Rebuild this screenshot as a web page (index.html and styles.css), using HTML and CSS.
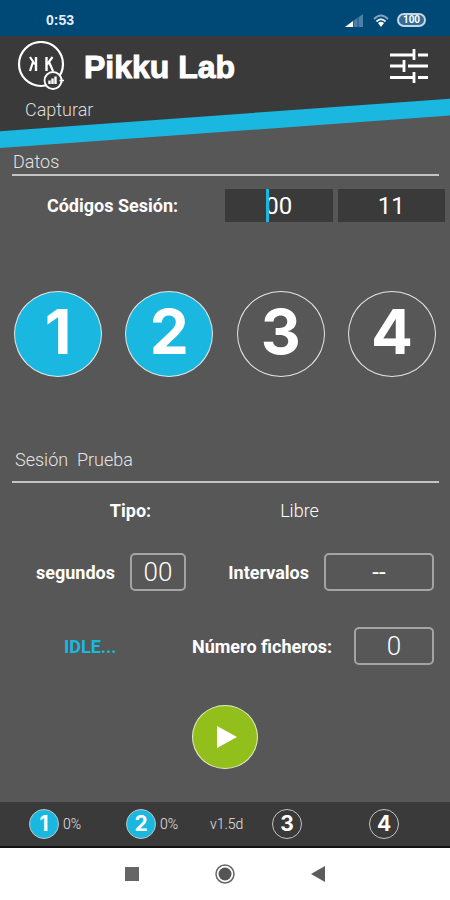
FILE: index.html
```html
<!DOCTYPE html>
<html lang="es">
<head>
<meta charset="utf-8">
<meta name="viewport" content="width=device-width, initial-scale=1">
<title>Pikku Lab</title>
<link rel="stylesheet" href="styles.css">
</head>
<body>
<div class="status">
  <span class="clock">0:53</span>
  <svg class="signal" width="18" height="13" viewBox="0 0 18 13" aria-hidden="true">
    <path d="M0 13 18 0V13Z" fill="#4b7fa8"/><path d="M0 13 8 7V13Z" fill="#fff"/>
    <path d="M8.500 6V13M13 3V13" stroke="#1d5b8c" stroke-width="1"/>
  </svg>
  <svg class="wifi" width="16" height="13" viewBox="0 0 16 13" fill="none" aria-hidden="true">
    <path d="M1 5Q8-2 15 5" stroke="#7fa5c2" stroke-width="2"/>
    <path d="M3.500 7.500Q8 3 12.500 7.500" stroke="#e4edf4" stroke-width="2"/>
    <path d="M5 9Q8 6.500 11 9L8 13Z" fill="#fff"/>
  </svg>
  <span class="battery">100</span>
</div>

<header class="header">
  <div class="brand">
    <svg class="logo" width="48" height="50" viewBox="0 0 48 50" fill="none" stroke="#fff" aria-hidden="true">
      <circle cx="24" cy="23" r="22" stroke-width="2.200"/>
      <path d="M19 16V30M29.500 16V30" stroke-width="2.400"/>
      <path d="M13 16 18 23.500M16 21 13 30M35.500 16 30 23.500M32 21 36 30" stroke-width="2.200"/>
      <circle cx="36" cy="39.500" r="8.500" fill="#3a3a3a" stroke-width="1.800"/>
      <path d="M32.500 43V39.500M35.500 43V37.500M38.500 43V35.500" stroke-width="2.400"/>
      <path d="M42.500 39.500H47M44.700 37V42" stroke-width="1.300"/>
    </svg>
    <h1 class="title">Pikku Lab</h1>
    <button class="settings" type="button" aria-label="Ajustes">
      <svg width="38" height="34" viewBox="0 0 38 34" fill="none" stroke="#fff" stroke-width="2.800" aria-hidden="true">
        <path d="M0 6H25M28 6H38M24 0V11M0 17H14M18 17H38M14 11V23M0 28.500H25M28 28.500H38M24 23V34"/>
      </svg>
    </button>
  </div>
  <div class="tab">Capturar</div>
</header>

<main class="main">
  <h2 class="section">Datos</h2>
  <div class="codes">
    <label class="label" for="code-a">Códigos Sesión:</label>
    <span class="code-field"><input class="code" id="code-a" type="text" value="00"><i class="caret"></i></span>
    <span class="code-field"><input class="code" type="text" value="11" aria-label="Segundo código"></span>
  </div>

  <div class="sensors">
    <button class="sensor on" type="button">1</button>
    <button class="sensor on" type="button">2</button>
    <button class="sensor" type="button">3</button>
    <button class="sensor" type="button">4</button>
  </div>

  <h2 class="section session">Sesión&nbsp; Prueba</h2>
  <div class="type-row">
    <label class="label" for="type">Tipo:</label>
    <select class="type" id="type"><option>Libre</option></select>
  </div>
  <div class="row">
    <label class="label" for="seconds">segundos</label>
    <input class="box small" id="seconds" type="text" value="00">
    <label class="label push" for="intervals">Intervalos</label>
    <select class="box wide" id="intervals"><option>--</option></select>
  </div>
  <div class="row files">
    <span class="label state">IDLE...</span>
    <label class="label push" for="files">Número ficheros:</label>
    <input class="box medium" id="files" type="text" value="0">
  </div>
  <button class="play" type="button" aria-label="Iniciar">
    <svg width="20" height="22" viewBox="0 0 20 22" aria-hidden="true"><path d="M0 0 20 11 0 22Z" fill="#fff"/></svg>
  </button>
</main>

<footer class="footer">
  <span class="device"><b class="badge on">1</b>0%</span>
  <span class="device"><b class="badge on">2</b>0%</span>
  <span class="device">v1.5d</span>
  <span class="device"><b class="badge">3</b></span>
  <span class="device"><b class="badge">4</b></span>
</footer>

<nav class="nav">
  <button type="button" aria-label="Recientes"><svg width="14" height="14" viewBox="0 0 14 14"><path d="M0 0H14V14H0Z" fill="#666"/></svg></button>
  <button type="button" aria-label="Inicio"><svg width="20" height="20" viewBox="0 0 20 20"><circle cx="10" cy="10" r="9" fill="none" stroke="#666" stroke-width="1.500"/><circle cx="10" cy="10" r="6.500" fill="#555"/></svg></button>
  <button type="button" aria-label="Atrás"><svg width="14" height="16" viewBox="0 0 14 16"><path d="M0 8 14 0V16Z" fill="#5c5c5c"/></svg></button>
</nav>
</body>
</html>
```
FILE: styles.css
```css
* { box-sizing: border-box; }

body {
  margin: 0;
  min-height: 100vh;
  display: flex;
  flex-direction: column;
  background: #575757;
  color: #fff;
  font-family: Roboto, "Liberation Sans", sans-serif;
  font-size: 18px;
}

button, input, select {
  margin: 0;
  padding: 0;
  border: 0;
  background: none;
  color: inherit;
  font: inherit;
  appearance: none;
}

svg { display: block; }

.status {
  height: 36px;
  padding: 4px 24px 0 46px;
  display: flex;
  align-items: center;
  background: #004876;
}
.clock {
  margin-right: auto;
  color: #e4edf4;
  font: bold 14px "Liberation Sans", sans-serif;
}
.signal { margin-right: 2px; }
.wifi { margin: 0 8px; }
.battery {
  width: 29px;
  height: 14px;
  border: 2px solid #c4d6e4;
  border-radius: 7px;
  background: #356c94;
  font: bold 10px/10px Roboto, sans-serif;
  text-align: center;
}

.header {
  position: relative;
  z-index: 0;
  height: 112px;
}
.header::before,
.header::after {
  content: "";
  position: absolute;
  inset: 0;
  z-index: -1;
}
.header::before {
  background: #1ab8e0;
  clip-path: polygon(0 0, 100% 0, 100% 71%, 0 100%);
}
.header::after {
  background: #3a3a3a;
  clip-path: polygon(0 0, 100% 0, 100% 56%, 0 85%);
}
.brand {
  height: 60px;
  padding: 0 22px 0 17px;
  display: flex;
  align-items: center;
}
.logo { margin-right: 19px; }
.title {
  margin: 0;
  padding-top: 2px;
  font: bold 32px "Liberation Sans", sans-serif;
  -webkit-text-stroke: 1px #fff;
}
.settings { margin-left: auto; }
.tab {
  padding-left: 25px;
  color: #ddd;
  font-weight: 300;
  line-height: 28px;
}

.main {
  flex: 1;
  display: flex;
  flex-direction: column;
}
.section {
  margin: 0 11px 0 12px;
  padding: 2px 1px 0;
  border-bottom: 2px solid #c4c4c4;
  color: #e4e4e4;
  font-size: 18px;
  font-weight: 300;
  line-height: 24px;
}
.session {
  margin-top: 71px;
  padding: 0 3px 9px;
}
.label {
  font-weight: bold;
}
.codes {
  margin-top: 13px;
  padding: 0 5px;
  display: grid;
  grid-template-columns: 2fr 1fr 1fr;
  column-gap: 5px;
  align-items: center;
}
.codes .label { text-align: center; }
.code-field { position: relative; }
.code {
  display: block;
  width: 100%;
  height: 33px;
  background: #3a3a3a;
  font-size: 24px;
  text-align: center;
}
.caret {
  position: absolute;
  top: 0;
  left: 38%;
  width: 3px;
  height: 100%;
  background: #1ab8e0;
}

.sensors {
  margin-top: 69px;
  padding: 0 14px;
  display: flex;
  justify-content: space-between;
}
.sensor {
  width: 88px;
  height: 86px;
  padding-bottom: 4px;
  border: 1px solid #e4e4e4;
  border-radius: 50%;
  font: 700 62px/80px Inter, sans-serif;
  text-align: center;
}
.on { background: #1ab8e0; }

.type-row {
  margin-top: 16px;
  padding: 0 66px 0 46px;
  display: grid;
  grid-template-columns: 1fr 1fr;
  justify-items: center;
  align-items: center;
  line-height: 24px;
}
.type {
  font-weight: 300;
  text-align: center;
}
.row {
  margin-top: 30px;
  padding: 0 16px 0 36px;
  display: flex;
  align-items: center;
  gap: 15px;
}
.files {
  margin-top: 36px;
  padding-left: 64px;
  gap: 22px;
}
.push { margin-left: auto; }
.state { color: #1ab8e0; }
.box {
  height: 38px;
  border: 2px solid #a4a4a4;
  border-radius: 5px;
  font-size: 26px;
  font-weight: 300;
  text-align: center;
}
.small { width: 56px; }
.medium { width: 80px; }
.wide {
  width: 110px;
  font-size: 24px;
  font-weight: 400;
}
.play {
  width: 66px;
  height: 64px;
  margin: 40px auto 0;
  padding-left: 4px;
  display: grid;
  place-items: center;
  border: 1px solid #e4eec4;
  border-radius: 50%;
  background: #93bf1c;
}

.footer {
  height: 46px;
  padding-left: 29px;
  display: grid;
  grid-template-columns: 97fr 84fr 62fr 97fr 81fr;
  align-items: center;
  background: #3a3a3a;
  border-bottom: 2px solid #111;
}
.device {
  display: flex;
  align-items: center;
  gap: 4px;
  color: #e4e4e4;
  font-size: 14px;
  font-weight: 300;
}
.badge {
  width: 30px;
  height: 30px;
  border: 1px solid #c4c4c4;
  border-radius: 50%;
  color: #fff;
  font: 700 21px/28px Inter, sans-serif;
  text-align: center;
}
.nav {
  height: 52px;
  padding: 0 19%;
  display: grid;
  grid-template-columns: repeat(3, 1fr);
  place-items: center;
  background: #fff;
}
```
